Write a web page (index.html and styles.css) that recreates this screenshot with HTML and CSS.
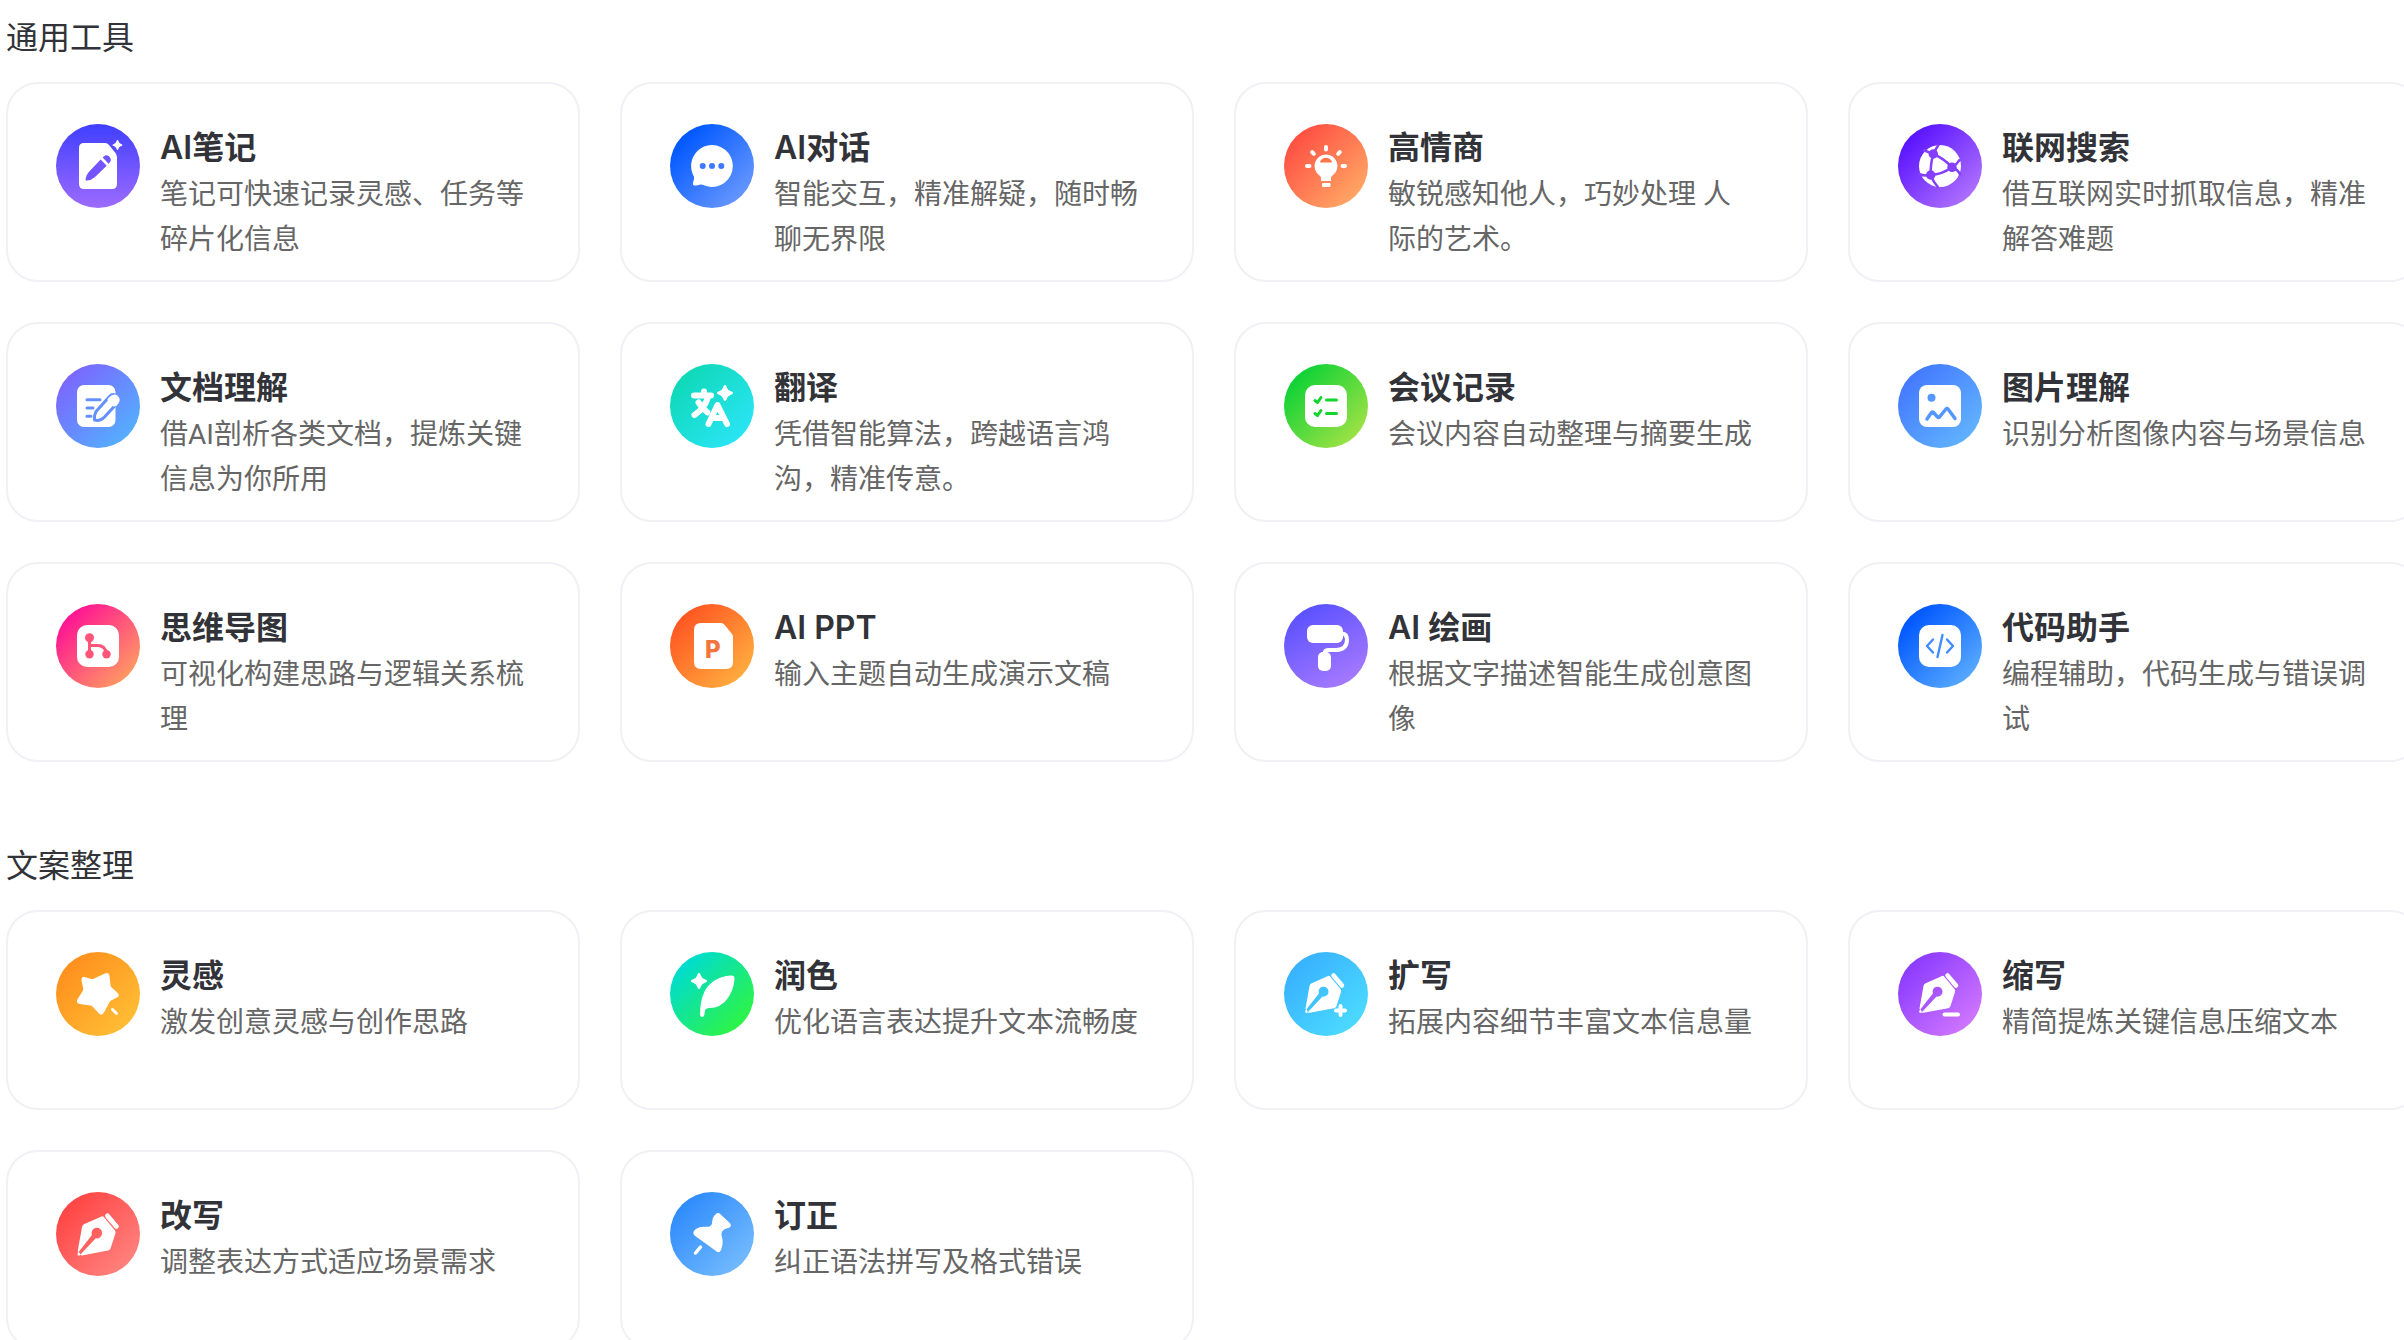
FILE: index.html
```html
<!DOCTYPE html>
<html lang="zh-CN">
  <head>
    <meta charset="UTF-8" />
    <meta name="viewport" content="width=device-width, initial-scale=1.0" />
    <title>AI 工具</title>
    <link rel="stylesheet" href="styles.css">
  </head>

  <body>
    <!-- 公用图形 -->
    <svg class="defs" aria-hidden="true">
      <symbol id="nib" viewBox="0 0 84 84">
        <path fill-rule="evenodd" d="M43 24.500q2-1.500 3.500 .5l10 12q1 1.500 .5 3l-4.500 14q-.6 1.800-2.500 2.200L25.500 60.800q-1 .2-1.700-.6L38.500 44.600a5 5 0 1 0-3.600-3L22.300 57.500q-.8 0-.8-1L25.500 34q.4-2 2.200-2.800z" />
        <path d="M22.300 57l1.900 3.200-1.800.8q-1.400 0-1.200-1.800z" />
        <path d="M49.500 23.500l8.500 10" fill="none" stroke="#fff" stroke-width="4.500" stroke-linecap="round" />
      </symbol>
      <symbol id="spark" viewBox="0 0 20 20">
        <path d="M10 1q1.500 0 2 2.500 1 3.500 4.500 4.500 2.500.5 2.500 2t-2.500 2q-3.500 1-4.500 4.500-.5 2.500-2 2.500t-2-2.500Q7 13 3.500 12 1 11.500 1 10t2.500-2Q7 7 8 3.500 8.500 1 10 1z" />
      </symbol>
    </svg>

    <main class="page">
      <section class="section">
        <h2>通用工具</h2>
        <div class="card-grid">
          <a class="card" href="#">
            <svg class="icon icon-note" viewBox="0 0 84 84">
              <path d="M28 19h21q2.500 0 4 2l6.500 8q1.500 2 1.500 4.500V60q0 5-5 5H28q-5 0-5-5V24q0-5 5-5z" />
              <path fill="#7354ff" d="M44.700 35.500l6 6.300L39 53q-4 3.600-8.500 3.500-1.200 0-1-1.200.6-4.500 3.500-7.500zM46.700 33.500l1.300-1.300q2.500-2 5 0 3 3 1.200 5.600L52.600 39.700z" />
              <use href="#spark" x="56" y="15.500" width="11" height="11" />
            </svg>
            <div class="card-text">
              <h3>AI笔记</h3>
              <p>笔记可快速记录灵感、任务等碎片化信息</p>
            </div>
          </a>

          <a class="card" href="#">
            <svg class="icon icon-chat" viewBox="0 0 84 84">
              <path d="M42 21a21 21 0 1 1-9.500 39.800q-2-.7-4 .1-3 1-4.500.6-1.500-.5-1-2.500l1-4q.4-1.700-.5-3.300A21 21 0 0 1 42 21z" />
              <g fill="#3d79ff">
                <circle cx="32.700" cy="42" r="3" />
                <circle cx="42" cy="42" r="3" />
                <circle cx="51.300" cy="42" r="3" />
              </g>
            </svg>
            <div class="card-text">
              <h3>AI对话</h3>
              <p>智能交互，精准解疑，随时畅聊无界限</p>
            </div>
          </a>

          <a class="card" href="#">
            <svg class="icon icon-bulb" viewBox="0 0 84 84">
              <path d="M42 30.500a11.500 11.500 0 0 1 6.500 21q-1.500 1-1.500 2.500v3H37v-3q0-1.500-1.500-2.500A11.500 11.500 0 0 1 42 30.500z" />
              <rect x="38" y="59" width="8.500" height="4" rx="1" />
              <path d="M42 23v2.500M23 42h2.500M58.500 42H61M28.200 28.200l1.600 1.600M55.800 28.200l-1.600 1.600" fill="none" stroke="#fff" stroke-width="4" stroke-linecap="round" />
              <path fill="#ff7748" d="M36 37.500q2-3.800 6-3.800t6 3.800q.3 1-1 1H37q-1.300 0-1-1z" />
            </svg>
            <div class="card-text">
              <h3>高情商</h3>
              <p>敏锐感知他人，巧妙处理 人际的艺术。</p>
            </div>
          </a>

          <a class="card" href="#">
            <svg class="icon icon-web" viewBox="0 0 84 84">
              <circle cx="42" cy="42" r="21" />
              <g fill="#843fff" stroke="#843fff" stroke-width="2.500">
                <path fill="none" d="M35.300 30q-3 10-2.600 21Q44 50.500 54 43.300 46 34.500 35.300 30zM35.300 30q3-6 5.500-9.500M35.300 30l-10-4M54 43.300q5-3 8-8M54 43.300q6 2 8.500 8M32.700 51q-6 1.500-12-1M32.700 51q2.500 7 7.500 12.500" />
                <circle cx="35.300" cy="30" r="3.500" />
                <circle cx="54" cy="43.300" r="3.500" />
                <circle cx="32.700" cy="51" r="3.500" />
              </g>
            </svg>
            <div class="card-text">
              <h3>联网搜索</h3>
              <p>借互联网实时抓取信息，精准解答难题</p>
            </div>
          </a>

          <a class="card" href="#">
            <svg class="icon icon-doc" viewBox="0 0 84 84">
              <rect x="21" y="21" width="38.500" height="42" rx="7" />
              <g stroke="#6490ff" stroke-width="3" stroke-linecap="round" stroke-linejoin="round">
                <path fill="none" d="M31 35.700h13M31 44h6M31 52.300h4" />
                <path d="M38.500 56q-.5-5 1.500-8.500L53.500 32.500q3.500-3.500 7-.5 3.500 3.500.5 7.500L48 53.500q-4 4-9.500 2.500z" />
              </g>
              <path d="M53 33.500q4.500-5 8.500-2 4 3.800.5 8.500l-2 2.200-2.500.3-5.500-5-.5-2.200z" />
            </svg>
            <div class="card-text">
              <h3>文档理解</h3>
              <p>借AI剖析各类文档，提炼关键信息为你所用</p>
            </div>
          </a>

          <a class="card" href="#">
            <svg class="icon icon-translate" viewBox="0 0 84 84">
              <g fill="none" stroke="#fff" stroke-width="6" stroke-linecap="round" stroke-linejoin="round">
                <path d="M34 27.500v3M24 31.500H41M38 33Q35 44 24.500 51M28.500 38.500q4 6 9 10" />
                <path d="M38.500 60L47.500 41l9.500 19M42.500 54H53" />
              </g>
              <use href="#spark" x="46" y="20" width="18" height="18" />
            </svg>
            <div class="card-text">
              <h3>翻译</h3>
              <p>凭借智能算法，跨越语言鸿沟，精准传意。</p>
            </div>
          </a>

          <a class="card" href="#">
            <svg class="icon icon-meeting" viewBox="0 0 84 84">
              <rect x="21" y="21" width="42" height="42" rx="10" />
              <path fill="none" stroke="#14d42e" stroke-width="3" stroke-linecap="round" stroke-linejoin="round" d="M31 36.500l2.500 2 3.500-5M42.500 36h10M31 49.500l2.500 2 3.500-5M42.500 49.500h10" />
            </svg>
            <div class="card-text">
              <h3>会议记录</h3>
              <p>会议内容自动整理与摘要生成</p>
            </div>
          </a>

          <a class="card" href="#">
            <svg class="icon icon-image" viewBox="0 0 84 84">
              <rect x="21" y="21" width="42" height="42" rx="8" />
              <circle cx="33.500" cy="33.700" r="4" fill="#5597ff" />
              <path fill="none" stroke="#5597ff" stroke-width="3.500" stroke-linecap="round" stroke-linejoin="round" d="M29 55l4.500-6.500q1-1 2 0l4 4.500q1 1 2 0l6.500-8q1-1.200 2 0L57 54.500" />
            </svg>
            <div class="card-text">
              <h3>图片理解</h3>
              <p>识别分析图像内容与场景信息</p>
            </div>
          </a>

          <a class="card" href="#">
            <svg class="icon icon-mind" viewBox="0 0 84 84">
              <rect x="21" y="21" width="42" height="42" rx="10" />
              <path fill="none" stroke="#ff5579" stroke-width="3" d="M33.500 34v16M33.500 41.500h8q8 0 9 8.500" />
              <g fill="#ff5579">
                <circle cx="33.500" cy="33.700" r="4.500" />
                <circle cx="33.500" cy="50.300" r="4.200" />
                <circle cx="50.500" cy="50.300" r="4.200" />
              </g>
            </svg>
            <div class="card-text">
              <h3>思维导图</h3>
              <p>可视化构建思路与逻辑关系梳理</p>
            </div>
          </a>

          <a class="card" href="#">
            <svg class="icon icon-ppt" viewBox="0 0 84 84">
              <path d="M31 19h20q2 0 3.200 1.500L62 30q1 1.500 1 3v25q0 7-7 7H31q-7 0-7-7V26q0-7 7-7z" />
              <text x="35" y="54">P</text>
            </svg>
            <div class="card-text">
              <h3>AI PPT</h3>
              <p>输入主题自动生成演示文稿</p>
            </div>
          </a>

          <a class="card" href="#">
            <svg class="icon icon-paint" viewBox="0 0 84 84">
              <rect x="23" y="21" width="36" height="18" rx="6" />
              <rect x="34" y="48" width="13" height="19" rx="5" />
              <path fill="none" stroke="#fff" stroke-width="4" stroke-linecap="round" d="M58 29.500q5 .5 5 6 0 10-10.500 10.500H44q-3.500 0-3.500 4" />
            </svg>
            <div class="card-text">
              <h3>AI 绘画</h3>
              <p>根据文字描述智能生成创意图像</p>
            </div>
          </a>

          <a class="card" href="#">
            <svg class="icon icon-code" viewBox="0 0 84 84">
              <rect x="21" y="21" width="42" height="42" rx="10" />
              <path fill="none" stroke="#3f8dff" stroke-width="2.400" stroke-linecap="round" stroke-linejoin="round" d="M35 35.500L29 42l6 6.500M49 35.500l6 6.500-6 6.500M44.500 31l-5 22" />
            </svg>
            <div class="card-text">
              <h3>代码助手</h3>
              <p>编程辅助，代码生成与错误调试</p>
            </div>
          </a>
        </div>
      </section>

      <section class="section">
        <h2>文案整理</h2>
        <div class="card-grid">
          <a class="card" href="#">
            <svg class="icon icon-idea" viewBox="0 0 84 84">
              <path d="M28.500 25l7 2q1.500.3 2.700-.6L49 21.500q4-1.500 4.500 2.500l1 9q.2 1.500 1.200 2.600l6 5.400q2.500 3-.7 4.500l-6 3q-1.300.8-1.800 2.200L48 60.500q-2.500 4-5.500.5l-5.500-6q-1-1-2.500-1.400L23.500 52q-4-1.200-1.800-5l5-8q.7-1.200.5-2.600l-1.700-8q-.3-4 3-3.400z" />
              <path d="M56.500 57.500l4 4" stroke="#fff" stroke-width="3" stroke-linecap="round" />
            </svg>
            <div class="card-text">
              <h3>灵感</h3>
              <p>激发创意灵感与创作思路</p>
            </div>
          </a>

          <a class="card" href="#">
            <svg class="icon icon-polish" viewBox="0 0 84 84">
              <use href="#spark" x="20" y="20" width="18" height="18" />
              <path d="M61 23.500q3.500-.3 3.500 3Q64 37 58 46q-7 10-18.500 10-4 0-4.500 2.500l-.7 4.500q-.4 2-2.300 2-2-.3-2-2.500Q30 49 34.500 39.500 42 25 61 23.500z" />
            </svg>
            <div class="card-text">
              <h3>润色</h3>
              <p>优化语言表达提升文本流畅度</p>
            </div>
          </a>

          <a class="card" href="#">
            <svg class="icon icon-expand" viewBox="0 0 84 84">
              <use href="#nib" width="84" height="84" />
              <path d="M56.500 54v9M52 58.500h9" stroke="#fff" stroke-width="4" stroke-linecap="round" />
            </svg>
            <div class="card-text">
              <h3>扩写</h3>
              <p>拓展内容细节丰富文本信息量</p>
            </div>
          </a>

          <a class="card" href="#">
            <svg class="icon icon-shorten" viewBox="0 0 84 84">
              <use href="#nib" width="84" height="84" />
              <path d="M46.500 62.500H60" stroke="#fff" stroke-width="4" stroke-linecap="round" />
            </svg>
            <div class="card-text">
              <h3>缩写</h3>
              <p>精简提炼关键信息压缩文本</p>
            </div>
          </a>

          <a class="card" href="#">
            <svg class="icon icon-rewrite" viewBox="0 0 84 84">
              <use href="#nib" x="-1" y="-1" width="89" height="89" />
            </svg>
            <div class="card-text">
              <h3>改写</h3>
              <p>调整表达方式适应场景需求</p>
            </div>
          </a>

          <a class="card" href="#">
            <svg class="icon icon-pin" viewBox="0 0 84 84">
              <path d="M46 22q2-2 4.500.3l9.500 9q2 2.500-.5 4.200-2 .8-4.500 1.500-4 2-3.500 6 2.500 8-.5 15-2 4-5 1L24.500 43.500q-3-3.500 1.500-6.500 4-3 10-2.200 5 .5 6-3.300 0-6.500 4-9.500z" />
              <path d="M30.500 55l-5 6" stroke="#fff" stroke-width="3.500" stroke-linecap="round" />
            </svg>
            <div class="card-text">
              <h3>订正</h3>
              <p>纠正语法拼写及格式错误</p>
            </div>
          </a>
        </div>
      </section>
    </main>
  </body>
</html>
```
FILE: styles.css
```css
:root {
  --title-color: #323338;
  --text-color: #666;
  --border-color: #f0f0f5;
  --border-radius: 32px;
}

* {
  box-sizing: border-box;
  margin: 0;
  padding: 0;
}

body {
  background-color: #fff;
  color: var(--title-color);
  font-family: Roboto, "Noto Sans CJK SC", sans-serif;
  overflow: hidden;
}

.defs {
  display: none;
}

.page {
  padding: 14px 0 40px 6px;
  margin-right: -18px;
}

.section {
  margin-bottom: 80px;
}

h2 {
  font-size: 32px;
  font-weight: 400;
  line-height: 48px;
  margin-bottom: 20px;
}

.card-grid {
  display: grid;
  grid-template-columns: repeat(4, 1fr);
  gap: 40px;
}

.card {
  display: flex;
  align-items: flex-start;
  gap: 20px;
  min-height: 200px;
  padding: 40px 48px 16px;
  border: 2px solid var(--border-color);
  border-radius: var(--border-radius);
  color: inherit;
  text-decoration: none;
}

.card-text {
  flex: 1;
}

h3 {
  font-family: Inter, "Noto Sans CJK SC", sans-serif;
  font-size: 32px;
  font-weight: 600;
  line-height: 48px;
}

p {
  color: var(--text-color);
  font-size: 28px;
  line-height: 45px;
}

.icon {
  flex: none;
  width: 84px;
  height: 84px;
  border-radius: 50%;
  fill: #fff;
}

.icon text {
  fill: #f5733c;
  font-family: Inter, sans-serif;
  font-size: 24px;
  font-weight: 800;
}

.icon-note {
  background: linear-gradient(180deg, #403fff, #9d6bff);
}

.icon-chat {
  background: linear-gradient(135deg, #0057ff 15%, #6b9aff 90%);
}

.icon-bulb {
  background: linear-gradient(135deg, #ff5043 15%, #ffaa66 90%);
}

.icon-web {
  background: linear-gradient(135deg, #5a14ff 15%, #b274ff 90%);
}

.icon-doc {
  background: linear-gradient(135deg, #7a68ff 15%, #52b2ff 90%);
}

.icon-translate {
  background: linear-gradient(135deg, #0fd9b8 15%, #2be5f8 90%);
}

.icon-meeting {
  background: linear-gradient(135deg, #0fd236 15%, #a5e245 90%);
}

.icon-image {
  background: linear-gradient(135deg, #447aff 15%, #62b5ff 90%);
}

.icon-mind {
  background: linear-gradient(135deg, #ff1493 15%, #ffa060 90%);
}

.icon-ppt {
  background: linear-gradient(135deg, #ff5722 15%, #ffb040 90%);
}

.icon-paint {
  background: linear-gradient(150deg, #5850ff 10%, #a87aff 90%);
}

.icon-code {
  background: linear-gradient(135deg, #0057ff 15%, #5cadff 90%);
}

.icon-idea {
  background: linear-gradient(135deg, #ff901d 15%, #ffbf36 90%);
}

.icon-polish {
  background: linear-gradient(135deg, #00dcd0 15%, #30f53c 90%);
}

.icon-expand {
  background: linear-gradient(135deg, #38b2ff 15%, #4cdcff 90%);
}

.icon-shorten {
  background: linear-gradient(135deg, #8c3cff 15%, #d278ff 90%);
}

.icon-rewrite {
  background: linear-gradient(135deg, #ff4545 15%, #ff8480 90%);
}

.icon-pin {
  background: linear-gradient(135deg, #2f8cfb 15%, #76bcff 90%);
}

@media (max-width: 1200px) {
  .page {
    padding-right: 6px;
    margin-right: 0;
  }

  .card-grid {
    grid-template-columns: repeat(2, 1fr);
  }
}
```
